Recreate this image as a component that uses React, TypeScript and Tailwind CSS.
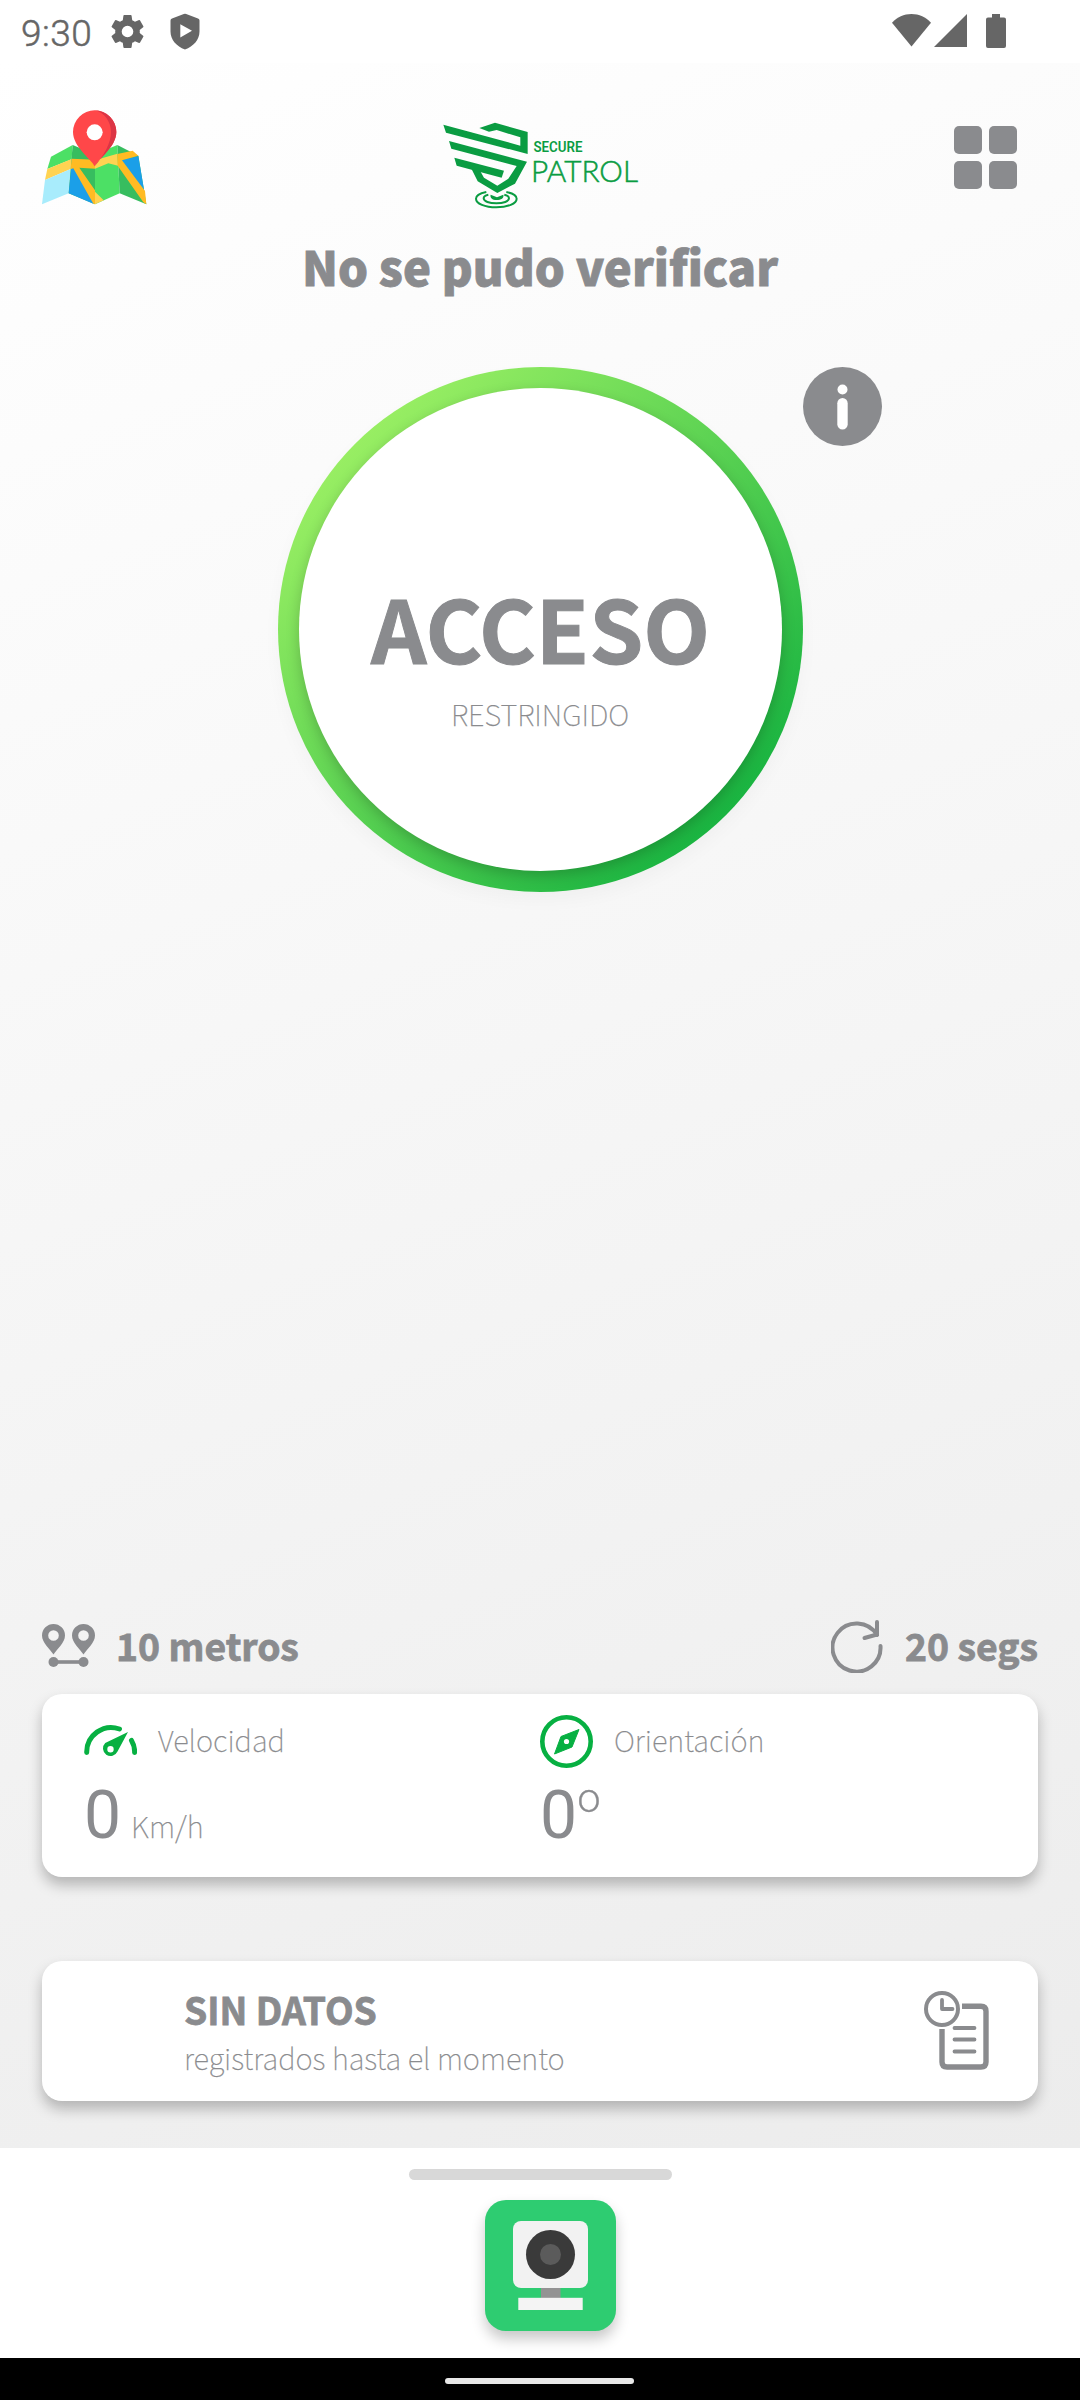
import type { ReactNode } from 'react';

const GREEN = '#0a9c42';

function StatusBar() {
  return (
    <div className="flex h-[63px] items-start justify-between bg-white text-[#666666]">
      <div className="flex h-[63px] pl-[21px]">
        <span className="w-[71px] pt-[12px] font-[Roboto] text-[37px] leading-[44px] font-light tracking-[0.500px] whitespace-nowrap [-webkit-text-stroke:0.5px_#666666]">9:30</span>
        <svg className="mt-[11px] ml-[15px]" width="41" height="41" viewBox="0 0 24 24" fill="currentColor">
          <path d="M19.14 12.94c.04-.3.06-.61.06-.94s-.02-.64-.07-.94l2.03-1.58a.49.49 0 0 0 .12-.61l-1.92-3.32a.49.49 0 0 0-.59-.22l-2.39.96c-.5-.38-1.03-.7-1.62-.94l-.36-2.54a.48.48 0 0 0-.48-.41h-3.84a.47.47 0 0 0-.47.41l-.36 2.54c-.59.24-1.13.57-1.62.94l-2.39-.96a.48.48 0 0 0-.59.22L2.74 8.87a.47.47 0 0 0 .12.61l2.03 1.58c-.05.3-.09.63-.09.94s.02.64.07.94l-2.03 1.58a.49.49 0 0 0-.12.61l1.92 3.32c.12.22.37.29.59.22l2.39-.96c.5.38 1.03.7 1.62.94l.36 2.54c.05.24.24.41.48.41h3.84c.24 0 .44-.17.47-.41l.36-2.54c.59-.24 1.13-.56 1.62-.94l2.39.96c.22.08.47 0 .59-.22l1.92-3.32a.47.47 0 0 0-.12-.61l-2.01-1.58zM12 15.4a3.4 3.4 0 1 1 0-6.8 3.4 3.4 0 0 1 0 6.8z" />
        </svg>
        <svg className="mt-[13px] ml-[22px]" width="30" height="37" viewBox="0 0 30 37">
          <path fill="currentColor" d="M13.800 0.900Q15 0.400 16.200 0.900L28 5.500Q29.500 6 29.500 7.500V18.500c0 8-6 15-14.500 18C6.500 33.500 0.500 26.500 0.500 18.500V7.500Q0.500 6 2 5.500z" />
          <path fill="#fff" d="M10.300 11.200v13.300L22 17.800z" />
        </svg>
      </div>
      <div className="flex pr-[74px]">
        <svg className="mt-[13px]" width="39" height="34" viewBox="0 0 39 34" fill="currentColor">
          <path d="M0 9.800C5 4 12 1 19.500 1S34 4 39 9.800L19.500 33.500z" />
        </svg>
        <svg className="mt-[13px] ml-[3px]" width="33" height="34" viewBox="0 0 33 34" fill="currentColor">
          <path d="M33 1v33H0z" />
        </svg>
        <svg className="mt-[14px] ml-[19px]" width="20" height="34" viewBox="0 0 20 34" fill="currentColor">
          <path d="M6 0h8v3.500h4a2 2 0 0 1 2 2V32a2 2 0 0 1-2 2H2a2 2 0 0 1-2-2V5.500a2 2 0 0 1 2-2h4z" />
        </svg>
      </div>
    </div>
  );
}

function MapIcon() {
  return (
    <svg width="107" height="95" viewBox="15 17 321 285">
      <path fill="#4ce065" d="M45 157 110 122 107 165 34 194z" />
      <path fill="#ffd352" d="M34 194 107 164 104 194 27 227z" />
      <path fill="#a8ecfc" d="M27 227 104 194 98 267 18 300z" />
      <path fill="#37bd5f" d="M110 122 177 150V300L98 267z" />
      <path fill="#ffbb23" d="M107 163 177 166V193L130 190 177 258V300L164 294 104 194z" />
      <path fill="#1b9fe8" d="M105 194 112 192 172 298 98 267z" />
      <path fill="#4ce065" d="M177 150 244 122 251 267 177 300z" />
      <path fill="#ffd352" d="M177 168 244 148 246 184 217 177 177 193zM177 262 203 288 177 300z" />
      <path fill="#37bd5f" d="M244 122 307 154 331 300 251 267z" />
      <path fill="#1b9fe8" d="M254 168 307 155 325 262z" />
      <path fill="#ffbb23" d="M244 149 290 139 307 154 258 168 327 260 331 300 322 294 245 184z" />
      <path fill="#ff4749" d="M176 186C166 164 111 128 111 83a65 65 0 0 1 130 0c0 45-55 81-65 103z" />
      <path fill="#dc3545" d="M176 186c28-33 49-70 49-103 0-30-20-59-49-65a65 65 0 0 1 65 65c0 45-55 81-65 103z" />
      <circle cx="176" cy="84" r="24" fill="#fff" />
    </svg>
  );
}

function Logo() {
  return (
    <svg width="220" height="100" viewBox="0 0 220 100">
      <g transform="scale(.3333)" fill={GREEN}>
        <path d="M163 54 210 38 308 66V132L63 68 55 44 286 107V82L215 60 192 65z" />
        <path d="M72 93 306 155 270 221 217 249 158 214 137 172 166 184 177 203 217 227 250 206 275 168 79 116z" />
        <path d="M88 143 237 182 230 203 95 167z" />
        <g fill="none" stroke={GREEN}>
          <path strokeWidth="6" d="M184 246c-20 4-31 11-31 20 0 15 27 26 61 26s61-11 61-26c0-9-11-16-31-20" />
          <path strokeWidth="6" d="M190 254c-9 2-14 6-14 11 0 9 17 15 38 15s38-6 38-15c0-5-5-9-14-11" />
        </g>
        <path d="M197 254 216 262 235 254c3 10-7 16-20 16s-21-7-18-16z" />
      </g>
      <text x="108.500" y="42" fill={GREEN} fontFamily="Roboto" fontWeight="600" fontSize="15" textLength="49" lengthAdjust="spacingAndGlyphs">SECURE</text>
      <text x="106" y="71.500" fill={GREEN} fontFamily="Lato" fontWeight="300" fontSize="29.500" stroke={GREEN} strokeWidth="0.500" textLength="107" lengthAdjust="spacingAndGlyphs">PATROL</text>
    </svg>
  );
}

function Header() {
  return (
    <header className="flex h-[172px] items-start">
      <div className="mt-[47px] ml-[41px] w-[107px]">
        <MapIcon />
      </div>
      <div className="mt-[47px] ml-[277px] w-[220px]">
        <Logo />
      </div>
      <div className="mt-[63px] ml-[309px] grid grid-cols-2 gap-[7px]">
        {[0, 1, 2, 3].map((n) => (
          <div key={n} className="size-[28px] rounded-[5px] bg-[#8a8b8e]" />
        ))}
      </div>
    </header>
  );
}

function AccessRing() {
  return (
    <div className="mt-[71px] flex items-start pl-[278px]">
      <div className="size-[525px] shrink-0 rounded-full bg-[linear-gradient(135deg,#b2fa6a,#00a83a)] p-[21px] shadow-[0_8px_18px_rgba(0,0,0,0.03)]">
        <div className="flex size-full flex-col items-center rounded-full bg-white pt-[194px] shadow-[0_5px_14px_rgba(0,0,0,0.2)]">
          <p className="text-[86.700px] leading-[88px] font-bold [-webkit-text-stroke:1px_#8a8b8e]">ACCESO</p>
          <p className="mt-[23px] mr-[1px] text-[29.200px] leading-[40px] font-thin [-webkit-text-stroke:0.25px_#8a8b8e]">RESTRINGIDO</p>
        </div>
      </div>
      <svg width="79" height="79" viewBox="0 0 79 79">
        <circle cx="39.500" cy="39.500" r="39.500" fill="#8a8b8e" />
        <circle cx="39.500" cy="22.500" r="5" fill="#fff" />
        <rect x="34.300" y="31" width="10.400" height="31.500" rx="5.200" fill="#fff" />
      </svg>
    </div>
  );
}

function DistanceIcon() {
  return (
    <svg className="mt-[2px]" width="53" height="44" viewBox="0 0 53 44" fill="#8a8b8e">
      {[0, 30].map((x) => (
        <g key={x} transform={`translate(${x} 0)`}>
          <path fillRule="evenodd" d="M11.500 0A11.500 11.500 0 0 1 23 11.500C23 19 15 25 11.500 30.500 8 25 0 19 0 11.500A11.500 11.500 0 0 1 11.500 0zm0 6.200a5.300 5.300 0 1 0 0 10.600 5.300 5.300 0 0 0 0-10.600z" />
          <circle cx="11.500" cy="38" r="5" />
        </g>
      ))}
      <rect x="11" y="36.200" width="31" height="3.600" />
    </svg>
  );
}

function RefreshIcon() {
  return (
    <svg width="53" height="56" viewBox="0 0 53 56" fill="none" stroke="#8a8b8e" strokeWidth="4" strokeLinecap="round" strokeLinejoin="round">
      <path d="M49.500 29A24 24 0 1 1 46 18" />
      <path d="M46 5V17.500L33.500 21" />
    </svg>
  );
}

function Metric({ icon, label, children }: { icon: ReactNode; label: string; children: ReactNode }) {
  return (
    <div className="w-[456px]">
      <div className="flex h-[53px] items-center">
        {icon}
        <span className="-mt-[6px] ml-[21px] text-[29.200px] leading-[40px] font-thin [-webkit-text-stroke:0.25px_#8a8b8e]">{label}</span>
      </div>
      <div className="mt-[12px] flex items-baseline">{children}</div>
    </div>
  );
}

function GaugeIcon() {
  return (
    <svg width="53" height="53" viewBox="0 0 53 53">
      <g fill="none" stroke="#07b042" strokeWidth="5" strokeLinecap="round">
        <path d="M2.700 37.500A24.500 24.500 0 0 1 35.500 14" />
        <path d="M47.500 25.500Q50.800 31 50.600 37.500" />
      </g>
      <path fill="#07b042" fillRule="evenodd" d="M44 17 33.500 36.500a7.600 7.600 0 1 1-12.300-8.500zM26.500 31a3.200 3.200 0 1 0 0 6.400 3.200 3.200 0 0 0 0-6.400z" />
    </svg>
  );
}

function CompassIcon() {
  return (
    <svg width="53" height="53" viewBox="0 0 53 53">
      <circle cx="26.500" cy="26.500" r="24.200" fill="none" stroke="#07b042" strokeWidth="4.600" />
      <path fill="#07b042" stroke="#07b042" strokeLinejoin="round" d="M39 14.500 32 32 14.500 39 21 21.500z" />
      <circle cx="26.500" cy="26.500" r="2.600" fill="#fff" />
    </svg>
  );
}

function HistoryIcon() {
  return (
    <svg width="66" height="80" viewBox="0 0 66 80" fill="none" stroke="#8a8b8e">
      <path strokeWidth="5.400" d="M38 15.300H57q5 0 5 5V71q0 5-5 5H23q-5 0-5-5V38" />
      <circle cx="18" cy="18" r="16" strokeWidth="4" />
      <g strokeWidth="3.800" strokeLinecap="round" strokeLinejoin="round">
        <path d="M18 9V18H28.500M30.500 37H50.500M30.500 48.500H50.500M30.500 60.500H50.500" />
      </g>
    </svg>
  );
}

function CameraIcon() {
  return (
    <svg width="75" height="89" viewBox="0 0 75 89">
      <rect width="75" height="67" rx="8" fill="#f2f2f2" />
      <circle cx="37.500" cy="33.500" r="24.500" fill="#3a3a3a" />
      <circle cx="37.500" cy="33.500" r="10.500" fill="#5b5b5b" />
      <rect x="28" y="67" width="19.500" height="10" fill="#939393" />
      <rect x="5.300" y="76.800" width="64.400" height="12.200" fill="#f4f4f4" />
    </svg>
  );
}

export default function App() {
  return (
    <div className="flex h-[2400px] w-[1080px] flex-col overflow-hidden bg-white font-['Noto_Sans_CJK_SC',sans-serif] text-[#8a8b8e]">
      <StatusBar />
      <main className="flex h-[2085px] flex-col bg-[linear-gradient(159deg,#ffffff,#ececec)]">
        <Header />
        <h1 className="mt-[1px] text-center text-[47.200px] leading-[60px] font-black [-webkit-text-stroke:0.8px_#8a8b8e]">No se pudo verificar</h1>
        <AccessRing />
        <div className="flex-1" />
        <div className="flex h-[54px] items-center px-[42px] text-[37.300px] leading-[54px] font-bold">
          <DistanceIcon />
          <span className="ml-[21px] [-webkit-text-stroke:0.8px_#8a8b8e]">10 metros</span>
          <span className="mr-[21px] ml-auto">
            <RefreshIcon />
          </span>
          <span className="[-webkit-text-stroke:0.8px_#8a8b8e]">20 segs</span>
        </div>
        <section className="mx-[42px] mt-[22px] flex h-[183px] rounded-[20px] bg-white pt-[21px] pl-[42px] shadow-[0_8px_14px_rgba(0,0,0,0.25)]">
          <Metric icon={<GaugeIcon />} label="Velocidad">
            <span className="font-[Roboto] text-[66px] leading-[72px]">0</span>
            <span className="ml-[10px] text-[29.400px] leading-[40px] font-thin [-webkit-text-stroke:0.25px_#8a8b8e]">Km/h</span>
          </Metric>
          <Metric icon={<CompassIcon />} label="Orientación">
            <span className="font-[Roboto] text-[66px] leading-[72px]">0</span>
            <span className="relative top-[1px] text-[61px] leading-[40px] font-thin [-webkit-text-stroke:0.4px_#8a8b8e]">º</span>
          </Metric>
        </section>
        <section className="mx-[42px] mt-[84px] mb-[47px] flex h-[140px] rounded-[20px] bg-white pt-[24px] pr-[48px] pl-[142px] shadow-[0_8px_14px_rgba(0,0,0,0.25)]">
          <div className="flex-1">
            <p className="text-[37.200px] leading-[48px] font-bold [-webkit-text-stroke:0.8px_#8a8b8e]">SIN DATOS</p>
            <p className="mt-[4px] text-[29.200px] leading-[40px] font-thin [-webkit-text-stroke:0.25px_#8a8b8e]">registrados hasta el momento</p>
          </div>
          <div className="mt-[6px]">
            <HistoryIcon />
          </div>
        </section>
      </main>
      <footer className="flex h-[210px] flex-col items-center bg-white">
        <div className="mt-[21px] h-[11px] w-[263px] rounded-full bg-[#d8d8d8]" />
        <div className="mt-[20px] ml-[21px] flex size-[131px] justify-center rounded-[21px] bg-[#2ecc71] pt-[21px] shadow-[0_8px_14px_rgba(0,0,0,0.22)]">
          <CameraIcon />
        </div>
      </footer>
      <div className="flex h-[42px] justify-center bg-black">
        <div className="mt-[20px] mr-[2px] h-[6px] w-[189px] rounded-full bg-[#e8e8e8]" />
      </div>
    </div>
  );
}
